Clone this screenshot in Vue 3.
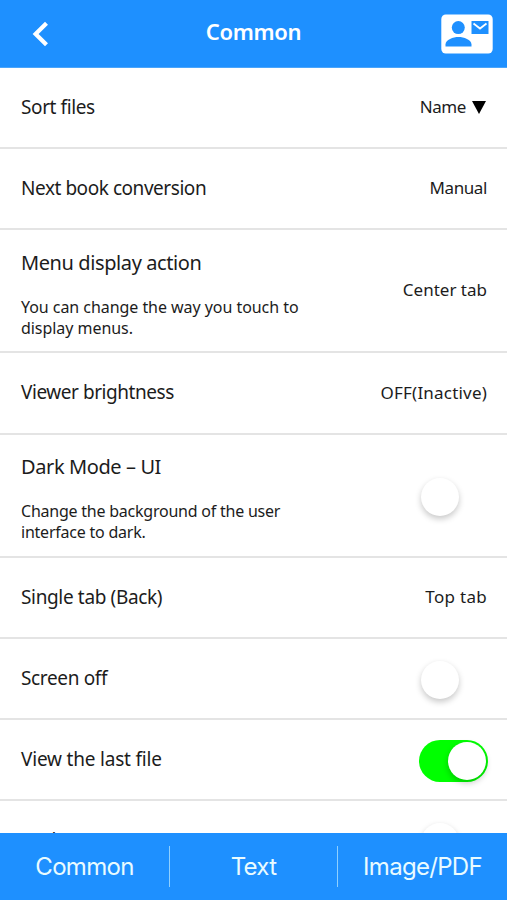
<script setup>
// `ls` and `vs` are the tracking of the label and the value, in pixels
const rows = [
  { label: 'Sort files', ls: -0.4, value: 'Name', vs: -0.4, arrow: true },
  { label: 'Next book conversion', ls: -0.45, value: 'Manual', vs: -0.4 },
  { label: 'Menu display action', ls: -0.4, note: ['You can change the way you touch to', 'display menus.'], ns: -0.05, value: 'Center tab', vs: 0 },
  { label: 'Viewer brightness', ls: -0.45, value: 'OFF(Inactive)', vs: 0.2 },
  { label: 'Dark Mode – UI', ls: -0.4, note: ['Change the background of the user', 'interface to dark.'], ns: -0.23, on: false },
  { label: 'Single tab (Back)', ls: -0.35, value: 'Top tab', vs: 0.3 },
  { label: 'Screen off', ls: -0.35, on: false },
  { label: 'View the last file', ls: -0.2, on: true },
  { label: 'Lock', ls: 0, on: false, last: true },
]
const tabs = ['Common', 'Text', 'Image/PDF']
const track = (n) => ({ letterSpacing: n + 'px' })
</script>

<template>
  <div class="screen">
    <header class="bar">
      <svg class="back" width="20" height="28" viewBox="0 0 20 28"><path d="M15.5 3.2 4.600 14l10.900 10.800" fill="none" stroke="#fff" stroke-width="4.200" /></svg>
      <h1>Common</h1>
      <svg class="contact" width="52" height="40" viewBox="0 0 52 40">
        <rect x=".3" y=".5" width="51.400" height="39" rx="4.500" fill="#fff" />
        <circle cx="17.300" cy="13.600" r="6.500" fill="#1e90ff" />
        <path d="M4.500 32.500v-2c0-5 7.800-7.600 13-7.600s13 2.600 13 7.600v2z" fill="#1e90ff" />
        <path d="M30.500 7h17v13h-17z" fill="#1e90ff" />
        <path d="m32.500 9.500 6.500 5 6.500-5" fill="none" stroke="#fff" stroke-width="1.800" />
      </svg>
    </header>
    <main>
      <section v-for="r in rows" :key="r.label" class="row" :class="{ tall: r.note, last: r.last }">
        <div class="copy">
          <div class="label" :style="track(r.ls)">{{ r.label }}</div>
          <p v-if="r.note" class="note" :style="track(r.ns)"><span v-for="l in r.note" :key="l">{{ l }}</span></p>
        </div>
        <div v-if="r.value" class="value" :style="track(r.vs)">{{ r.value }}<i v-if="r.arrow" class="arrow" /></div>
        <div v-else class="switch" :class="{ on: r.on }"><i class="knob" /></div>
      </section>
    </main>
    <nav>
      <div v-for="t in tabs" :key="t" class="tab">{{ t }}</div>
    </nav>
  </div>
</template>

<style>
body { background: #fff; overflow: hidden; }
</style>
<style scoped>
.screen { display: flex; flex-direction: column; width: 507px; height: 900px; overflow: hidden; background: #fff; font-family: "Noto Sans", "Open Sans", sans-serif; color: #1c1c1c; }
.bar { box-sizing: border-box; flex: none; display: grid; grid-template-columns: 70px 1fr 70px; align-items: center; height: 68px; background: #1e90ff; color: #fff; border-bottom: 1px solid #4ba5fb; }
.back { margin-left: 31px; }
h1 { margin: 0; text-align: center; font-size: 22px; font-weight: 600; letter-spacing: -0.3px; line-height: 30px; padding-bottom: 6px; }
.contact { margin: 1px 0 0 3.500px; }
main { flex: 1; min-height: 0; overflow: hidden; }
.row { box-sizing: border-box; display: flex; justify-content: space-between; align-items: center; height: 81.100px; padding: 0 20px 0 21px; border-bottom: 2px solid #e4e4e4; }
.row.tall { height: 123.300px; }
.copy { padding-bottom: 1.500px; }
.tall .copy { padding: 7px 0 0; }
.label { font-size: 19px; line-height: 26px; white-space: nowrap; }
.last .copy { padding-bottom: 2.200px; }
.tall .label { font-size: 20px; }
.note { display: flex; flex-direction: column; margin: 21px 0 0; font-size: 16px; line-height: 21px; white-space: nowrap; }
.value { display: flex; align-items: center; padding-bottom: 1px; font-size: 17px; line-height: 24px; white-space: nowrap; }
.arrow { margin: 0 1px 0 6px; border: 7px solid transparent; border-top: 13px solid #000; border-bottom: 0; }
.switch { box-sizing: border-box; width: 69px; height: 42px; padding: 2px; border-radius: 21px; margin: 3px -1px 0 0; }
.knob { display: block; width: 38px; height: 38px; border-radius: 50%; background: #fff; box-shadow: 0 3px 6px rgba(0,0,0,.22); }
.on { margin-top: 2px; background: #0f0; }
.on .knob { margin-left: 27px; }
nav { flex: none; display: grid; grid-template-columns: 169px 168px 170px; align-items: center; height: 67px; background: #1e90ff; color: #e9fbff; font-family: Inter, sans-serif; font-size: 24px; letter-spacing: -0.7px; }
.tab { text-align: center; line-height: 41px; }
.tab + .tab { border-left: 1px solid #8fd0ff; }
</style>
